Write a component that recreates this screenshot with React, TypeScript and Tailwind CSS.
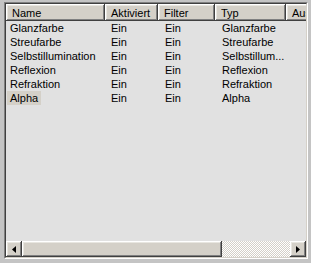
import React from 'react';

const columns = [
  { label: 'Name', width: 'w-[99px]' },
  { label: 'Aktiviert', width: 'w-[53px]' },
  { label: 'Filter', width: 'w-[57px]' },
  { label: 'Typ', width: 'w-[71px]' },
  { label: 'Ausgabe', width: 'w-[60px]' },
];

const rows = [
  ['Glanzfarbe', 'Ein', 'Ein', 'Glanzfarbe'],
  ['Streufarbe', 'Ein', 'Ein', 'Streufarbe'],
  ['Selbstillumination', 'Ein', 'Ein', 'Selbstillum...'],
  ['Reflexion', 'Ein', 'Ein', 'Reflexion'],
  ['Refraktion', 'Ein', 'Ein', 'Refraktion'],
  ['Alpha', 'Ein', 'Ein', 'Alpha'],
];

const raised =
  'bg-[#d4d0c8] shadow-[inset_-1px_-1px_#404040,inset_1px_1px_#ffffff,inset_-2px_-2px_#808080,inset_2px_2px_#e8e6e0]';

function Arrow({ dir }: { dir: 'left' | 'right' }) {
  return (
    <svg width="4" height="7" viewBox="0 0 4 7">
      {dir === 'left' ? (
        <path d="M4 0 L4 7 L0 3.5 Z" fill="#000" />
      ) : (
        <path d="M0 0 L0 7 L4 3.5 Z" fill="#000" />
      )}
    </svg>
  );
}

export default function App() {
  return (
    <div
      className="w-[311px] h-[263px] bg-[#c4c4c4] pl-[4px] pt-[2px] pr-[3px] pb-[4px] text-[11px] leading-[14px] text-black"
      style={{ fontFamily: '"Liberation Sans", Arial, sans-serif' }}
    >
      <div className="h-full flex flex-col border border-t-[#808080] border-l-[#808080] border-b-white border-r-white">
        <div className="flex-1 flex flex-col min-h-0 border border-t-[#404040] border-l-[#404040] border-b-[#d4d0c8] border-r-[#d4d0c8] bg-[#e1e1e1] overflow-hidden">
          <div className="flex h-[17px] shrink-0 overflow-hidden">
            {columns.map((c) => (
              <div
                key={c.label}
                className={`${c.width} shrink-0 h-full flex items-center pl-[6px] ${raised} whitespace-nowrap overflow-hidden`}
              >
                {c.label}
              </div>
            ))}
          </div>
          <div className="flex-1 flex flex-col">
            {rows.map((r) => (
              <div key={r[0]} className="flex h-[14px]">
                <div className="w-[99px] shrink-0 pl-[1px]">
                  <span
                    className={`inline-block px-[3px] ${
                      r[0] === 'Alpha' ? 'bg-[#d4d0c8]' : ''
                    }`}
                  >
                    {r[0]}
                  </span>
                </div>
                <div className="w-[53px] shrink-0 pl-[6px]">{r[1]}</div>
                <div className="w-[57px] shrink-0 pl-[7px]">{r[2]}</div>
                <div className="w-[71px] shrink-0 pl-[7px] whitespace-nowrap">{r[3]}</div>
              </div>
            ))}
          </div>
          <div className="flex h-[16px] shrink-0">
            <div className={`w-[16px] shrink-0 flex items-center justify-center ${raised}`}>
              <Arrow dir="left" />
            </div>
            <div className={`w-[200px] shrink-0 ${raised}`} />
            <div className="flex-1 bg-[repeating-conic-gradient(#ffffff_0_25%,#d4d0c8_0_50%)] bg-[length:2px_2px]" />
            <div className={`w-[16px] shrink-0 flex items-center justify-center ${raised}`}>
              <Arrow dir="right" />
            </div>
          </div>
        </div>
      </div>
    </div>
  );
}
